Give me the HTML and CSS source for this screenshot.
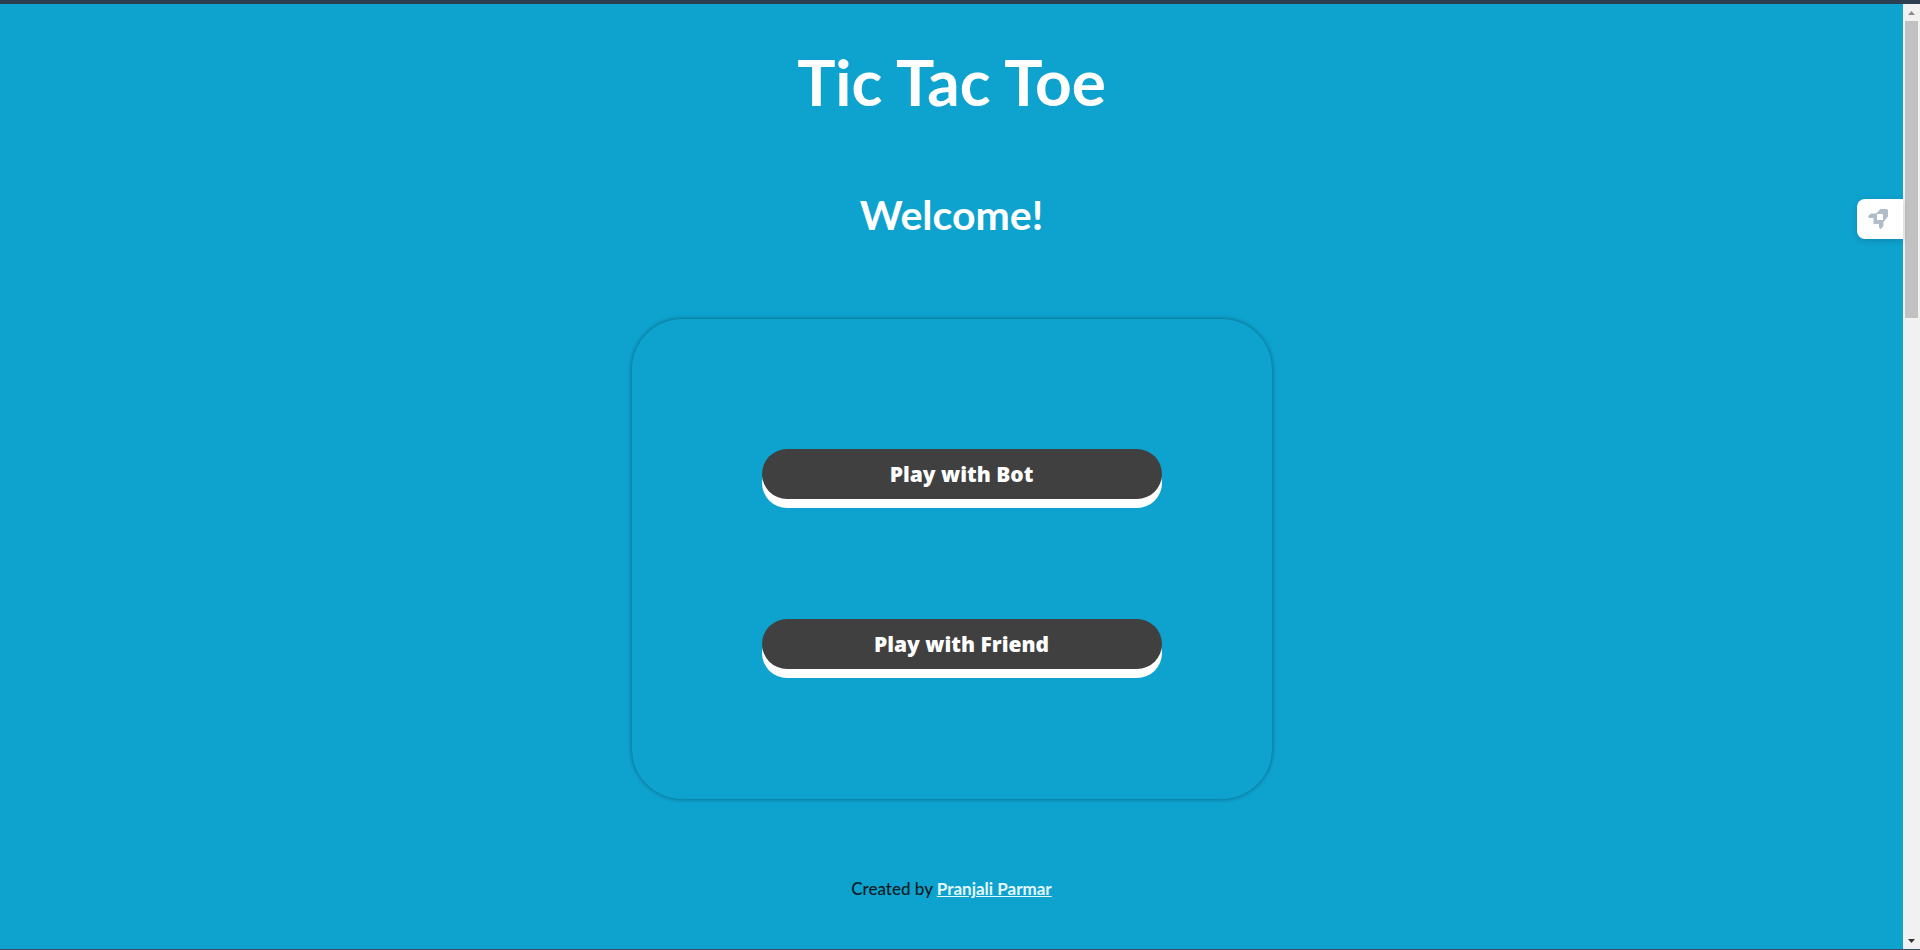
FILE: index.html
```html
<!DOCTYPE html>
<html lang="en">
<head>
<meta charset="utf-8">
<title>Tic Tac Toe</title>
<link rel="stylesheet" href="styles.css">
</head>
<body>
<div class="page">
  <main class="game">
    <h1 class="title">Tic Tac Toe</h1>
    <h2 class="welcome">Welcome!</h2>
    <section class="menu">
      <button class="play" type="button">Play with Bot</button>
      <button class="play" type="button">Play with Friend</button>
    </section>
    <footer class="credit">Created by <a class="author" href="#">Pranjali Parmar</a></footer>
  </main>
  <button class="launcher" type="button" aria-label="Launch">
    <svg class="rocket" viewBox="0 0 20 20" aria-hidden="true">
      <path fill="#b0bdc9" fill-rule="evenodd" d="M12.5 0H18.5Q20 0 20 1.5V7.500L15.500 13V16.500Q15 18.500 12.500 20Q11 19.500 11 18V15H5.500V9H2Q.5 9 0 7.500Q1.500 5 3.500 4.500H8Z M9.500 5Q9 5 9 5.500V10.500Q9 11 9.500 11H14.500Q15 11 15 10.500V5.500Q15 5 14.500 5Z"/>
    </svg>
  </button>
  <div class="scrollbar" aria-hidden="true">
    <svg class="arrow" viewBox="0 0 17 17"><path d="M5 11h7L8.500 7z" fill="#8c8c8c"/></svg>
    <div class="thumb"></div>
    <svg class="arrow arrow-down" viewBox="0 0 17 17"><path d="M5 7h7L8.500 11z" fill="#333"/></svg>
  </div>
</div>
</body>
</html>
```
FILE: styles.css
```css
* { box-sizing: border-box; }

body {
  margin: 0;
  background: #0ea2ce;
  font-family: Lato, "Liberation Sans", sans-serif;
}

.page {
  position: relative;
  display: flex;
  min-height: 100vh;
  border-top: 4px solid #2c3e50;
  border-bottom: 1px solid #35505d;
}

.game {
  flex: 1;
  display: flex;
  flex-direction: column;
  align-items: center;
}

.title,
.welcome {
  margin: 0;
  color: #fff;
  font-weight: 700;
}

.title {
  padding-top: 38px;
  font-size: 64px;
  line-height: 80px;
}

.welcome {
  padding: 63px 0 74px;
  font-size: 41px;
  line-height: 60px;
}

.menu {
  display: flex;
  flex-direction: column;
  align-items: center;
  gap: 120px;
  width: 640px;
  max-width: 100%;
  padding: 130px 0 130px 20px;
  border-radius: 50px;
  box-shadow: 0 0 4px rgba(0, 0, 0, 0.4);
}

.play {
  width: 400px;
  max-width: 100%;
  height: 50px;
  padding: 0;
  border: 0;
  border-radius: 25px;
  background: #404040;
  box-shadow: 0 9px 0 #fff;
  color: #fff;
  font-family: "Open Sans", "Liberation Sans", sans-serif;
  font-size: 21px;
  font-weight: 800;
  cursor: pointer;
}

.credit {
  padding-top: 78px;
  color: #071b22;
  font-size: 17px;
  font-weight: 500;
  line-height: 24px;
}

.author {
  color: #e4f8ff;
  font-weight: 700;
}

.launcher {
  position: absolute;
  top: 195px;
  right: 17px;
  display: flex;
  align-items: center;
  width: 46px;
  height: 40px;
  padding: 0 0 0 11px;
  border: 0;
  border-radius: 8px 0 0 8px;
  background: #fff;
  box-shadow: 0 2px 6px rgba(0, 0, 0, 0.15);
}

.rocket {
  width: 20px;
  height: 20px;
}

.scrollbar {
  display: flex;
  flex-direction: column;
  width: 17px;
  background: #f1f1f1;
}

.arrow {
  width: 17px;
  height: 17px;
}

.arrow-down {
  margin-top: auto;
}

.thumb {
  width: 13px;
  height: 297px;
  margin: 0 2px;
  background: #c1c1c1;
}
```
